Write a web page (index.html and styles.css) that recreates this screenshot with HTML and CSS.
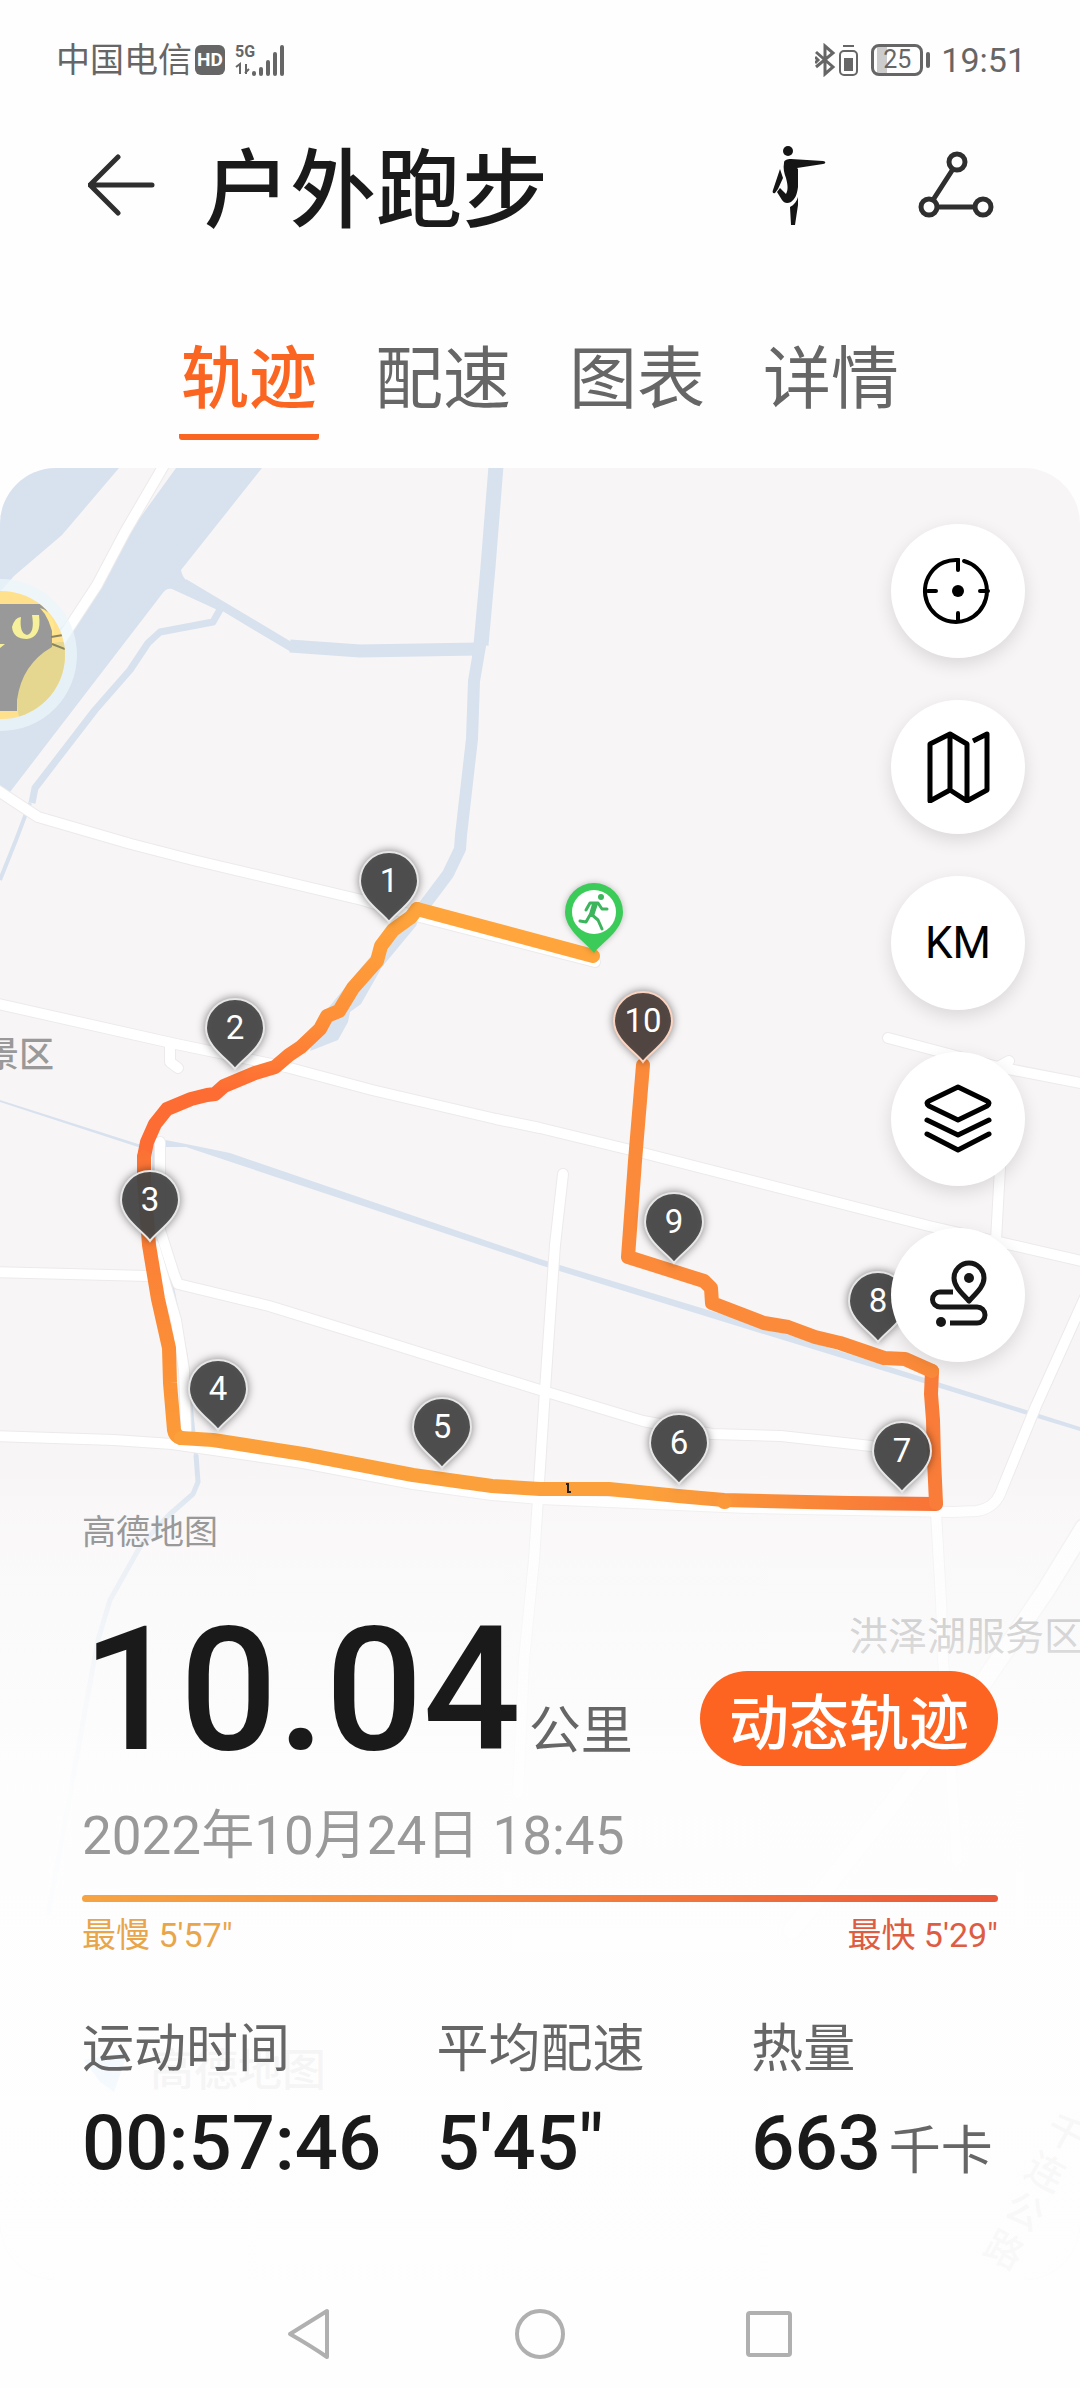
FILE: index.html
```html
<!DOCTYPE html>
<html lang="zh-CN">
<head>
<meta charset="utf-8">
<meta name="viewport" content="width=device-width, initial-scale=1.0">
<title>户外跑步</title>
<link rel="stylesheet" href="styles.css">
</head>
<body>

<div class="status">
  <div class="status-side">
    <span class="carrier">中国电信</span>
    <span class="hd">HD</span>
    <svg class="signal" width="52" height="34" viewBox="0 0 52 34">
      <text x="0" y="14" class="signal-text">5G</text>
      <path d="M1 24l4-3v10M11 31V21M10 30l4-4" fill="none" stroke="#666" stroke-width="2"/>
      <path d="M19 30v1M26 26v5M33 19v12M40 11v20M47 4v27" stroke="#666" stroke-width="4" stroke-linecap="round"/>
    </svg>
  </div>
  <div class="status-side">
    <svg width="44" height="34" viewBox="0 0 44 34" fill="none" stroke="#666" stroke-width="2">
      <path d="M1 9l17 15-8 7V3l8 7L1 24M0 14l3 3-3 3" stroke-width="3"/>
      <rect x="25" y="8" width="17" height="24" rx="4"/>
      <path d="M28 3h11"/>
      <path d="M29 15h9v13h-9z" fill="#666" stroke="none"/>
    </svg>
    <span class="battery">25</span>
    <span class="clock">19:51</span>
  </div>
</div>

<header class="header">
  <button class="icon-button" aria-label="返回">
    <svg width="68" height="64" viewBox="0 0 68 64" fill="none" stroke="#2f2f2f" stroke-width="5" stroke-linecap="round" stroke-linejoin="round">
      <path d="M64 32H2M30 4L2 32l28 28"/>
    </svg>
  </button>
  <h1 class="title">户外跑步</h1>
  <button class="icon-button" aria-label="拉伸">
    <svg width="56" height="84" viewBox="0 0 56 84" fill="#151515">
      <circle cx="18" cy="8" r="5"/>
      <path d="M14 20c0-3 3-4 7-4l32 2c3 0 3 3 0 3l-26 4 1 1v18c-1 8-3 12-7 15-4 2-7 1-9-2l-5-8 3-4 6 6c3-5 1-12 0-16-2-5-3-10-2-15z"/>
      <path d="M10 26l3 9-5 11-3 4c-2 1-3-1-2-3z"/>
      <path d="M28 54v8l-3 20h-4l-1-18c4-2 7-6 8-10z"/>
    </svg>
  </button>
  <button class="icon-button" aria-label="分享">
    <svg width="76" height="68" viewBox="0 0 76 68" fill="none" stroke="#2f2f2f" stroke-width="5">
      <circle cx="39" cy="11" r="8"/>
      <circle cx="11" cy="56" r="8"/>
      <circle cx="65" cy="56" r="8"/>
      <path d="M35 18L15 49M19 56h38"/>
    </svg>
  </button>
</header>

<nav class="tabs">
  <a class="tab active" href="#track">轨迹</a>
  <a class="tab" href="#pace">配速</a>
  <a class="tab" href="#chart">图表</a>
  <a class="tab" href="#detail">详情</a>
</nav>

<main class="panel" id="track">
  <svg class="map" viewBox="0 468 1080 1812" preserveAspectRatio="xMidYMin slice">
    <defs>
      <linearGradient id="g2" gradientUnits="userSpaceOnUse" x1="0" y1="909" x2="0" y2="1090">
        <stop offset="0" stop-color="#ffa53c"/><stop offset="0.6" stop-color="#fd9038"/><stop offset="1" stop-color="#fd6d33"/>
      </linearGradient>
      <linearGradient id="g3" gradientUnits="userSpaceOnUse" x1="0" y1="1140" x2="0" y2="1430">
        <stop offset="0" stop-color="#fb7035"/><stop offset="1" stop-color="#fc9a38"/>
      </linearGradient>
      <linearGradient id="g4" gradientUnits="userSpaceOnUse" x1="650" y1="0" x2="936" y2="0">
        <stop offset="0" stop-color="#fba03b"/><stop offset="1" stop-color="#f87337"/>
      </linearGradient>
      <linearGradient id="fade" x1="0" y1="0" x2="0" y2="1">
        <stop offset="0" stop-color="#fdfdfd" stop-opacity="0"/>
        <stop offset="0.08" stop-color="#fcfcfc" stop-opacity="0.5"/>
        <stop offset="0.28" stop-color="#fdfdfd" stop-opacity="0.84"/>
        <stop offset="0.4" stop-color="#fefefe" stop-opacity="0.93"/>
        <stop offset="1" stop-color="#fefefe" stop-opacity="0.96"/>
      </linearGradient>
      <path id="pin" d="M0 0C-6-9-29-22-29-41A29 29 0 1 1 29-41C29-22 6-9 0 0z"/>
      <g id="roads">
        <path d="M-6 788L38 817 131 844 193 860 362 900 412 915 595 962"/>
        <path d="M-6 1003L176 1044 286 1067 372 1090 496 1119 540 1128 643 1153 929 1226 1086 1262"/>
        <path d="M170 1044V1062L178 1068"/>
        <path d="M160 1142V1230L174 1274 178 1284 269 1306 389 1343 540 1390 643 1421 712 1434 781 1436 871 1446"/>
        <path d="M-6 1272L148 1276"/>
        <path d="M-6 1436L114 1440 172 1444 303 1463 413 1484 492 1495 540 1499 747 1508 953 1512 977 1511Q994 1508 1000 1494L1036 1406 1086 1295"/>
        <path d="M563 1174L555 1245 545 1390 534 1560 524 1660 518 1793"/>
        <path d="M888 1038L998 1067 1086 1084M998 1067l11-6M1001 1150L996 1240"/>
        <path d="M936 1513L941 1600 943 1660 957 1860"/>
        <path d="M167 460L125 532 97 585 40 672"/>
        <path d="M154 1245L176 1320 184 1370 186 1430"/>
      </g>
      <path id="highway" d="M1084 1528L1046 1590 985 1680 895 1800 792 1930"/>
    </defs>

    <rect y="468" width="1080" height="1812" fill="#f8f5f6"/>

    <!-- 水系 -->
    <g fill="#d7e2ee">
      <path d="M0 468H119L62 535 14 576 0 592z"/>
      <path d="M176 468H262L181 570Q182 576 186 580L226 606 222 612 172 589Q166 588 162 594L10 792 0 786V690L71 617 121 544z"/>
      <path d="M0 1100L138 1144 160 1139 186 1144 230 1153 540 1259 764 1327 1080 1427V1431L760 1333 540 1265 240 1165 186 1147 138 1147 0 1102z"/>
      <path d="M424 906L416 926 382 967 361 1004 350 1012 348 1022 338 1040 310 1051 320 1018 380 945zM232 1082h14l-6 4zM204 1094h20q-4 6-16 3l-32 6z"/>
    </g>
    <g fill="none" stroke="#d7e2ee" stroke-linejoin="round">
      <path d="M184 583L226 608 293 648" stroke-width="9"/>
      <path d="M290 646L360 651 478 649" stroke-width="13"/>
      <path d="M496 466L488 567 481 645" stroke-width="15"/>
      <path d="M481 640L474 681 472 739 461 835 460 849 448 874 424 906" stroke-width="12"/>
      <path d="M222 606L213 622 160 632 148 643 130 670 95 710 35 788 32 803" stroke-width="7"/>
      <path d="M30 803L16 840 0 880" stroke-width="4"/>
      <path d="M154 1145v50l18 92 14 70 7 72 3 26" stroke-width="4"/>
      <path d="M196 1455l2 27-5 12-24 21-28 30-31 55-12 40-12 65-16 90-22 120" stroke-width="5"/>
    </g>

    <!-- 道路：描边 + 填充 -->
    <g fill="none" stroke-linejoin="round" stroke-linecap="round">
      <use href="#roads" stroke="#eceaeb" stroke-width="12"/>
      <use href="#highway" stroke="#eceaeb" stroke-width="20"/>
      <use href="#roads" stroke="#fff" stroke-width="10"/>
      <use href="#highway" stroke="#fff" stroke-width="17"/>
    </g>

    <text class="place" x="54" y="1067" text-anchor="end">景区</text>
    <text class="place area" x="849" y="1650">洪泽湖服务区</text>
    <g class="place road" transform="translate(1034 2194) rotate(28)">
      <text y="-55">千</text>
      <text y="-11">连</text>
      <text y="33">公</text>
      <text y="77">路</text>
    </g>
    <path d="M84 2060L128 2052 114 2092 100 2082z" fill="#4ba6f5"/>
    <text class="place amap" x="150" y="2086">高德地图</text>

    <rect y="1470" width="1080" height="810" fill="url(#fade)"/>

    <g fill="none" stroke-width="14" stroke-linejoin="round" stroke-linecap="round">
      <path d="M593 956L417 909" stroke="#ffa53c"/>
      <path d="M417 909L411 917 393 930 381 946 377 961 368 971 353 988 339 1011 327 1016 320 1029 301 1047 289 1055 275 1067 255 1073 224 1086 215 1094 207 1095 191 1099 167 1109 155 1124 147 1142 144 1157" stroke="url(#g2)"/>
      <path d="M144 1157V1180L149 1245 158 1299 169 1348 170 1383 174 1430Q175 1436 181 1438" stroke="url(#g3)"/>
      <path d="M181 1438L213 1440 303 1454 413 1475 492 1486 540 1489 568 1489 609 1489 678 1496 724 1500 850 1503 936 1504" stroke="url(#g4)"/>
      <path d="M724 1502h1" stroke="#fb983a"/>
      <path d="M936 1503L934 1459 933 1420 931 1394 932 1371" stroke="#f97c39"/>
      <path d="M932 1371L905 1359 884 1358 840 1343 815 1337 788 1327 764 1323 712 1303 711 1288 704 1281 628 1257 635 1161 643 1065" stroke="#fb8b3a"/>
    </g>
    <path d="M566 1484h2v8h3" fill="none" stroke="#222" stroke-width="2"/>

    <g class="pins">
      <g transform="translate(389 922)"><use href="#pin"/><text y="-30">1</text></g>
      <g transform="translate(235 1069)"><use href="#pin"/><text y="-30">2</text></g>
      <g transform="translate(150 1241)"><use href="#pin"/><text y="-30">3</text></g>
      <g transform="translate(218 1430)"><use href="#pin"/><text y="-30">4</text></g>
      <g transform="translate(442 1468)"><use href="#pin"/><text y="-30">5</text></g>
      <g transform="translate(679 1484)"><use href="#pin"/><text y="-30">6</text></g>
      <g transform="translate(902 1492)"><use href="#pin"/><text y="-30">7</text></g>
      <g transform="translate(878 1342)"><use href="#pin"/><text y="-30">8</text></g>
      <g transform="translate(674 1263)"><use href="#pin"/><text y="-30">9</text></g>
      <g class="last" transform="translate(643 1062)"><use href="#pin"/><text y="-30">10</text></g>
    </g>

    <!-- 起点 -->
    <g class="start" transform="translate(594 953)">
      <use href="#pin" fill="#3bcb58"/>
      <circle cy="-41" r="22" fill="#fff"/>
      <circle cx="7" cy="-56" r="3" fill="#3cb55c"/>
      <path d="M-8-43l4-7 8 0 4 6 5 0M2-49l-5 10 7 6 4 9M-4-38l-4 7-6-1" fill="none" stroke="#3cb55c" stroke-width="3" stroke-linecap="round" stroke-linejoin="round"/>
      <path d="M-2-49l6 0-4 12-5-2z" fill="#3cb55c"/>
    </g>

    <!-- 悬浮头像 -->
    <clipPath id="face"><circle cx="1" cy="655" r="64"/></clipPath>
    <g>
      <circle cx="1" cy="655" r="76" fill="#ebf7fb" fill-opacity="0.7"/>
      <g clip-path="url(#face)">
        <path d="M-70 590H70V720H-70z" fill="#ffe08c"/>
        <ellipse cx="62" cy="700" rx="45" ry="58" fill="#e5d790"/>
        <path d="M0 604H40Q52 612 52 630V647Q22 664 17 700V711H0z" fill="#999"/>
        <path d="M40 608q10 2 14 16v16q-4-22-14-32z" fill="#ffe78e"/>
        <path d="M12 627q3-10 9-10-2 16 6 18 8-2 5-20l7 0q3 22-12 24-14 0-15-12z" fill="#f6f09a"/>
        <path d="M0 644h5l-5 4z" fill="#f6f09a"/>
        <path d="M51 637l12-2M52 644l13 5" stroke="#8b855f" stroke-width="2"/>
      </g>
    </g>
  </svg>

  <div class="tools">
    <button class="tool" aria-label="定位">
      <svg width="72" height="72" viewBox="0 0 72 72" fill="none" stroke="#000" stroke-width="4" stroke-linecap="round">
        <path d="M36 15V5A31 31 0 1 0 42 6M6 36h8M58 36h8M36 58v8"/>
        <circle cx="36" cy="36" r="6" fill="#000" stroke="none"/>
      </svg>
    </button>
    <button class="tool" aria-label="地图">
      <svg width="72" height="72" viewBox="0 0 72 72" fill="none" stroke="#000" stroke-width="5" stroke-linejoin="round">
        <path d="M8 13L28 3 45 13V70L28 59 8 70zM28 3V59M45 70L65 59V3L51 10"/>
      </svg>
    </button>
    <button class="tool km">KM</button>
    <button class="tool" aria-label="图层">
      <svg width="72" height="72" viewBox="0 0 72 72" fill="none" stroke="#000" stroke-width="5" stroke-linecap="round" stroke-linejoin="round">
        <path d="M36 4L65 18Q69 20 65 23L36 37 7 23Q3 20 7 18zM5 37L36 52 67 37M5 51L36 67 67 51"/>
      </svg>
    </button>
    <button class="tool" aria-label="路线">
      <svg width="72" height="72" viewBox="0 0 72 72" fill="none" stroke="#161616" stroke-width="5">
        <path d="M47 42C41 35 32 28 32 19A15 15 0 0 1 62 19C62 28 53 35 47 42z" stroke-linejoin="round"/>
        <circle cx="47" cy="19" r="5" fill="#161616" stroke="none"/>
        <path d="M31 33H18A7 7 0 0 0 18 48H55A8 8 0 0 1 55 64H28"/>
        <circle cx="19" cy="63" r="5" fill="#161616" stroke="none"/>
      </svg>
    </button>
  </div>

  <section class="summary">
    <p class="source">高德地图</p>
    <div class="distance-row">
      <p class="distance">10.04<span class="unit">公里</span></p>
      <button class="dynamic">动态轨迹</button>
    </div>
    <p class="date">2022年10月24日 18:45</p>
    <div class="pace-bar"></div>
    <div class="pace-labels">
      <span class="slow">最慢 5'57"</span>
      <span class="fast">最快 5'29"</span>
    </div>
    <dl class="stats">
      <div><dt>运动时间</dt><dd>00:57:46</dd></div>
      <div><dt>平均配速</dt><dd>5'45"</dd></div>
      <div><dt>热量</dt><dd>663<span class="unit">千卡</span></dd></div>
    </dl>
  </section>
</main>

<nav class="system-nav">
  <button class="icon-button" aria-label="后退">
    <svg width="52" height="52" viewBox="0 0 52 52"><path d="M42 3V49Q26 38 5 26 26 13 42 3z"/></svg>
  </button>
  <button class="icon-button" aria-label="主页">
    <svg width="52" height="52" viewBox="0 0 52 52"><circle cx="26" cy="26" r="23"/></svg>
  </button>
  <button class="icon-button" aria-label="最近任务">
    <svg width="52" height="52" viewBox="0 0 52 52"><rect x="5" y="5" width="42" height="42" rx="2"/></svg>
  </button>
</nav>

</body>
</html>
```
FILE: styles.css
```css
* {
  box-sizing: border-box;
}

body {
  margin: 0;
  background: #fefefe;
  color: #1a1a1a;
  font-family: Roboto, "Noto Sans CJK SC", sans-serif;
}

h1, p, dl, dd {
  margin: 0;
}

button {
  border: none;
  padding: 0;
  font-family: inherit;
  cursor: pointer;
}

svg {
  display: block;
}

.icon-button {
  background: none;
}

/* status bar */
.status {
  display: flex;
  justify-content: space-between;
  align-items: center;
  padding: 40px 54px 0 56px;
  height: 80px;
  color: #666;
}

.status-side {
  display: flex;
  align-items: center;
}

.carrier {
  font-size: 34px;
  line-height: 36px;
}

.hd {
  background: #666;
  color: #fff;
  font-size: 19px;
  font-weight: 700;
  line-height: 30px;
  border-radius: 6px;
  padding: 0 2px;
  margin: 0 10px 0 3px;
}

.signal-text {
  font-size: 16px;
  font-weight: 700;
  fill: #666;
}

.battery {
  position: relative;
  width: 52px;
  margin: 0 18px 0 12px;
  border: 3px solid #666;
  border-radius: 8px;
  background: linear-gradient(90deg, transparent 3px, #ccc 3px, #ccc 13px, transparent 13px);
  font-size: 25px;
  line-height: 26px;
  text-align: center;
}

.battery::after {
  content: "";
  position: absolute;
  right: -10px;
  top: 5px;
  width: 4px;
  height: 16px;
  border-radius: 2px;
  background: #666;
}

.clock {
  font-size: 34px;
}

/* header */
.header {
  display: flex;
  align-items: center;
  padding: 0 86px 0 88px;
  height: 210px;
}

.title {
  flex: 1;
  margin-left: 48px;
  padding-top: 14px;
  font-size: 86px;
  font-weight: 500;
  line-height: 120px;
}

.header .icon-button + .icon-button {
  margin-left: 92px;
}

.tabs {
  display: flex;
  justify-content: center;
  gap: 54px;
  height: 178px;
  padding-top: 40px;
}

.tab {
  height: 110px;
  padding: 0 2px;
  color: #666;
  font-size: 68px;
  line-height: 100px;
  text-decoration: none;
}

.tab.active {
  color: #fb6522;
  font-weight: 500;
  border-bottom: 6px solid #fb6522;
  border-radius: 3px;
}

/* map */
.panel {
  position: relative;
  overflow: hidden;
  border-radius: 56px;
  padding-top: 56px;
}

.map {
  position: absolute;
  top: 0;
  left: 0;
  width: 100%;
  height: 100%;
}

.place {
  font-size: 35px;
  font-weight: 500;
  fill: #999;
}

.place.area {
  font-size: 39px;
  font-weight: 400;
  fill: #777;
}

.place.road {
  font-size: 38px;
  text-anchor: middle;
  fill: #777;
}

.place.amap {
  font-size: 44px;
  fill: #555;
}

.pins use {
  fill: #484848;
  fill-opacity: 0.92;
  stroke: #e6e6e6;
  stroke-width: 2;
  filter: drop-shadow(0 0 4px rgba(0, 0, 0, 0.5));
}

.pins .last use {
  fill: #4b3f3b;
  stroke: #fbd3c0;
}

.pins text {
  font-size: 33px;
  text-anchor: middle;
  fill: #fff;
}

.start {
  filter: drop-shadow(0 0 3px rgba(0, 0, 0, 0.25));
}

.tools {
  position: relative;
  display: flex;
  flex-direction: column;
  align-items: flex-end;
  gap: 42px;
  padding-right: 55px;
}

.tool {
  display: flex;
  justify-content: center;
  align-items: center;
  width: 134px;
  height: 134px;
  border-radius: 50%;
  background: #fff;
  color: #000;
  box-shadow: 0 6px 18px rgba(0, 0, 0, 0.12);
}

.tool.km {
  font-size: 44px;
}

/* summary */
.summary {
  position: relative;
  padding: 146px 82px 82px;
}

.source {
  color: #999;
  font-size: 34px;
  line-height: 48px;
}

.distance-row {
  display: flex;
  justify-content: space-between;
  align-items: flex-end;
  height: 234px;
}

.distance {
  margin-bottom: 10px;
  font-size: 172px;
  font-weight: 500;
  line-height: 180px;
}

.unit {
  margin-left: 8px;
  color: #666;
  font-size: 52px;
  font-weight: 400;
  line-height: 1;
}

.dynamic {
  height: 95px;
  margin-bottom: 24px;
  padding: 0 29px;
  border-radius: 48px;
  background: #fd6421;
  color: #fff;
  font-size: 60px;
  font-weight: 500;
}

.date {
  margin-top: 8px;
  color: #999;
  font-size: 53px;
  line-height: 76px;
}

.pace-bar {
  height: 7px;
  margin-top: 21px;
  border-radius: 4px;
  background: linear-gradient(90deg, #f6a443, #f27a3c 60%, #e8583a);
}

.pace-labels {
  display: flex;
  justify-content: space-between;
  margin-top: 9px;
  font-size: 34px;
  line-height: 48px;
}

.slow {
  color: #e9a54a;
}

.fast {
  color: #dd5c42;
}

.stats {
  display: grid;
  grid-template-columns: 355fr 315fr 247fr;
  margin-top: 53px;
}

.stats dt {
  color: #666;
  font-size: 52px;
  line-height: 76px;
}

.stats dd {
  font-size: 76px;
  font-weight: 500;
  line-height: 110px;
  white-space: nowrap;
}

/* android buttons */
.system-nav {
  display: flex;
  justify-content: center;
  align-items: center;
  gap: 177px;
  height: 108px;
}

.system-nav svg {
  fill: none;
  stroke: #b0b0b0;
  stroke-width: 4;
  stroke-linejoin: round;
}
```
